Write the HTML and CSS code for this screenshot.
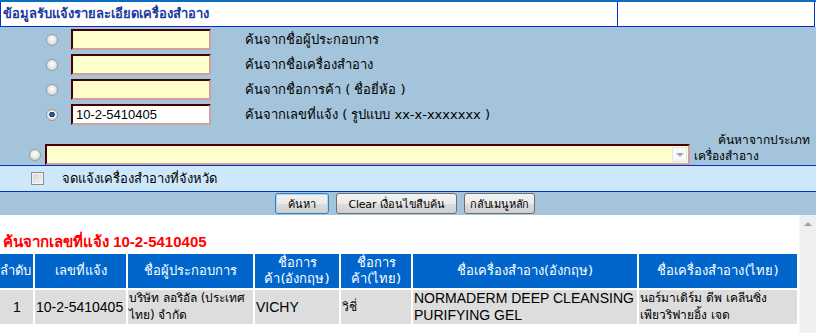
FILE: index.html
```html
<!DOCTYPE html>
<html lang="th">
<head>
  <meta charset="UTF-8">
  <title>ข้อมูลรับแจ้งรายละเอียดเครื่องสำอาง</title>
  <link rel="stylesheet" href="styles.css">
</head>
<body>
  <div class="topbar"></div>
  <div class="head">
    <div class="head-title">ข้อมูลรับแจ้งรายละเอียดเครื่องสำอาง</div>
    <div class="head-side"></div>
  </div>

  <div class="search">
    <div class="opt">
      <input type="radio" name="mode" class="radio">
      <input type="text" class="field">
      <span class="opt-label">ค้นจากชื่อผู้ประกอบการ</span>
    </div>
    <div class="opt">
      <input type="radio" name="mode" class="radio">
      <input type="text" class="field">
      <span class="opt-label">ค้นจากชื่อเครื่องสำอาง</span>
    </div>
    <div class="opt">
      <input type="radio" name="mode" class="radio">
      <input type="text" class="field">
      <span class="opt-label">ค้นจากชื่อการค้า ( ชื่อยี่ห้อ )</span>
    </div>
    <div class="opt">
      <input type="radio" name="mode" class="radio" checked>
      <input type="text" class="field field-filled" value="10-2-5410405">
      <span class="opt-label">ค้นจากเลขที่แจ้ง ( รูปแบบ xx-x-xxxxxxx )</span>
    </div>
    <div class="type-row">
      <input type="radio" name="mode" class="radio">
      <div class="select-wrap">
        <select class="type-select"><option></option></select>
        <span class="select-arrow"></span>
      </div>
      <div class="type-label">
        <span class="type-line1">ค้นหาจากประเภท</span>
        <span>เครื่องสำอาง</span>
      </div>
    </div>
  </div>

  <div class="province">
    <input type="checkbox" class="check">
    <span>จดแจ้งเครื่องสำอางที่จังหวัด</span>
  </div>

  <div class="actions">
    <button class="btn btn-search btn-focus">ค้นหา</button>
    <button class="btn btn-clear">Clear เงื่อนไขสืบค้น</button>
    <button class="btn btn-back">กลับเมนูหลัก</button>
  </div>

  <div class="results">
    <div class="results-body">
      <div class="results-title">ค้นจากเลขที่แจ้ง 10-2-5410405</div>
      <table class="grid">
        <colgroup>
          <col class="c1"><col class="c2"><col class="c3"><col class="c4"><col class="c5"><col class="c6"><col class="c7">
        </colgroup>
        <tr>
          <th class="left">ลำดับ</th>
          <th>เลขที่แจ้ง</th>
          <th>ชื่อผู้ประกอบการ</th>
          <th>ชื่อการ<br>ค้า(อังกฤษ)</th>
          <th>ชื่อการ<br>ค้า(ไทย)</th>
          <th>ชื่อเครื่องสำอาง(อังกฤษ)</th>
          <th>ชื่อเครื่องสำอาง(ไทย)</th>
        </tr>
        <tr>
          <td class="center">1</td>
          <td>10-2-5410405</td>
          <td class="thai">บริษัท ลอริอัล (ประเทศ<br>ไทย) จำกัด</td>
          <td>VICHY</td>
          <td class="thai">วิชี่</td>
          <td>NORMADERM DEEP CLEANSING<br>PURIFYING GEL</td>
          <td class="thai">นอร์มาเดิร์ม ดีพ เคลีนซิ่ง<br>เพียวริฟายอิ้ง เจด</td>
        </tr>
      </table>
    </div>
    <div class="scrollbar"><span class="scroll-up"></span></div>
  </div>
</body>
</html>
```

FILE: styles.css
```css
body {
  margin: 0;
  font-family: Tahoma, "DejaVu Sans", "Noto Sans", sans-serif;
  font-size: 13px;
  color: #000;
  background-color: #fff;
  width: 816px;
  height: 335px;
  overflow: hidden;
}

.topbar {
  height: 2px;
  background-color: #0a6fc2;
}

.head {
  display: flex;
  height: 24px;
  border: 1px solid #0033cc;
  border-top: none;
  border-bottom: 1px solid #0033cc;
  margin-right: 1px;
}

.head-title {
  width: 614px;
  padding-left: 2px;
  border-right: 1px solid #0033cc;
  font-weight: bold;
  color: #1a3aa0;
  line-height: 24px;
}

.head-side {
  flex: 1;
}

.search {
  background-color: #a3c4da;
  padding: 2px 0 0 0;
  border-bottom: 1px solid #0033cc;
}

.opt {
  display: flex;
  align-items: center;
  height: 21px;
  margin-bottom: 4px;
}

.radio {
  appearance: none;
  width: 12px;
  height: 12px;
  margin: 0;
  border: 1px solid #9a9a9a;
  border-radius: 50%;
  background: radial-gradient(circle at 50% 40%, #ffffff 0%, #e4e4e4 55%, #c8c8c8 100%);
  box-sizing: border-box;
}

.radio:checked {
  background:
    radial-gradient(circle at 50% 45%, #2f6c9c 0, #174a78 2.5px, transparent 3px),
    radial-gradient(circle at 50% 40%, #ffffff 0%, #e4e4e4 55%, #c8c8c8 100%);
}

.opt .radio {
  margin-left: 46px;
  margin-right: 13px;
}

.field {
  width: 140px;
  height: 21px;
  box-sizing: border-box;
  margin: 0;
  padding: 0 3px;
  border-style: solid;
  border-width: 2px;
  border-color: #4a0000 #d0a0a0 #d0a0a0 #4a0000;
  background-color: #ffffcc;
  font-family: "Liberation Sans", Arial, sans-serif;
  font-size: 13px;
}

.field-filled {
  background-color: #fff;
}

.opt-label {
  margin-left: 34px;
}

.type-row {
  display: flex;
  align-items: flex-end;
  margin-top: 5px;
  height: 35px;
}

.type-row .radio {
  margin: 0 4px 4px 29px;
}

.select-wrap {
  position: relative;
  width: 645px;
  height: 21px;
}

.type-select {
  appearance: none;
  width: 100%;
  height: 21px;
  margin: 0;
  box-sizing: border-box;
  border-style: solid;
  border-width: 2px;
  border-color: #4a0000 #d0a0a0 #d0a0a0 #4a0000;
  background-color: #ffffcc;
}

.select-arrow {
  position: absolute;
  right: 3px;
  top: 3px;
  width: 15px;
  height: 15px;
  box-sizing: border-box;
  border: 1px solid #e2e2e2;
  background-color: #f8f8f8;
}

.select-arrow::after {
  content: "";
  position: absolute;
  left: 3px;
  top: 5px;
  border-left: 4px solid transparent;
  border-right: 4px solid transparent;
  border-top: 4px solid #a8a8a8;
}

.type-label {
  flex: 1;
  min-width: 0;
  display: flex;
  flex-direction: column;
  margin-left: 4px;
  line-height: 16px;
  padding-bottom: 1px;
  white-space: nowrap;
  font-size: 12px;
}

.type-line1 {
  align-self: flex-end;
  padding-right: 6px;
}

.province {
  display: flex;
  align-items: center;
  height: 25px;
  background-color: #cde8fb;
  border-bottom: 1px solid #0033cc;
}

.check {
  appearance: none;
  width: 13px;
  height: 13px;
  margin: 0 18px 0 31px;
  box-sizing: border-box;
  border: 1px solid #8e8e8e;
  background: linear-gradient(135deg, #d6d6d6 0%, #f2f2f2 100%);
  box-shadow: inset 0 0 0 1px #f4f4f4;
}

.actions {
  display: flex;
  gap: 7px;
  height: 23px;
  padding-left: 275px;
  align-items: flex-start;
  padding-top: 1px;
  box-sizing: border-box;
  background-color: #a3c4da;
}

.btn {
  height: 21px;
  padding: 0 5px;
  margin: 0;
  border: 1px solid #707070;
  border-radius: 3px;
  background: linear-gradient(to bottom, #f2f2f2 0%, #ebebeb 50%, #dddddd 51%, #cfcfcf 100%);
  font-family: Tahoma, "DejaVu Sans", sans-serif;
  font-size: 11px;
  letter-spacing: -0.2px;
  color: #000;
  white-space: nowrap;
}

.btn-search { width: 54px; }
.btn-clear { min-width: 121px; }
.btn-back { min-width: 67px; }

.btn-focus {
  border-color: #3c7fb1;
  box-shadow: inset 0 0 0 1px #a6d8f5;
}

.results {
  display: flex;
  height: 118px;
}

.results-body {
  flex: 1;
  padding-top: 18px;
}

.results-title {
  padding-left: 3px;
  margin-bottom: 1px;
  color: #ff0000;
  font-weight: bold;
  font-family: "Liberation Sans", Tahoma, sans-serif;
  font-size: 15px;
  line-height: 18px;
}

.grid {
  table-layout: fixed;
  width: 801px;
  border-spacing: 2px;
  margin-left: -2px;
  margin-top: 0;
}

.c1 { width: 33px; }
.c2 { width: 91px; }
.c3 { width: 125px; }
.c4 { width: 84px; }
.c5 { width: 70px; }
.c6 { width: 224px; }
.c7 { width: 158px; }

.grid th {
  background-color: #0066cc;
  color: #fff;
  font-weight: normal;
  font-size: 13px;
  line-height: 16px;
  height: 34px;
  padding: 0;
  text-align: center;
}

.grid th.left {
  text-align: left;
}

.grid td {
  background-color: #dddddd;
  font-family: "Liberation Sans", Arial, sans-serif;
  font-size: 14px;
  line-height: 17px;
  height: 34px;
  padding: 0 0 0 1px;
  white-space: nowrap;
  overflow: hidden;
}

.grid td.thai {
  font-family: Tahoma, "DejaVu Sans", sans-serif;
  font-size: 12px;
}

.grid td.center {
  text-align: center;
}

.scrollbar {
  position: relative;
  width: 17px;
  background-color: #efefef;
  border-left: 1px solid #f8f8f8;
}

.scroll-up {
  position: absolute;
  left: 4px;
  top: 7px;
  border-left: 4px solid transparent;
  border-right: 4px solid transparent;
  border-bottom: 4px solid #a0a0a0;
}
```
